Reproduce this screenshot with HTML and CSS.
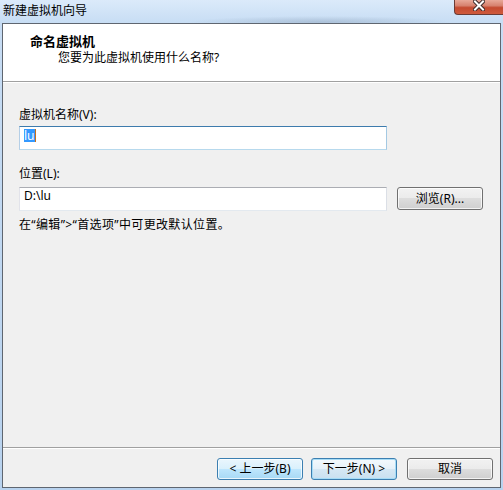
FILE: index.html
```html
<!DOCTYPE html>
<html lang="zh-CN">
<head>
<meta charset="utf-8">
<title>新建虚拟机向导</title>
<link rel="stylesheet" href="styles.css">
</head>
<body>
<div class="window">
  <div class="titlebar">
    <span class="title">新建虚拟机向导</span>
    <div class="close">
      <svg width="12" height="11" viewBox="0 0 12 11">
        <path d="M2 1.5 L10 9.5 M10 1.5 L2 9.5" stroke="#3c2a2a" stroke-width="4" stroke-linecap="square" fill="none"/>
        <path d="M2 1.5 L10 9.5 M10 1.5 L2 9.5" stroke="#ffffff" stroke-width="2" stroke-linecap="square" fill="none"/>
      </svg>
    </div>
  </div>
  <div class="client">
    <div class="header">
      <div class="h-title">命名虚拟机</div>
      <div class="h-sub">您要为此虚拟机使用什么名称?</div>
    </div>
    <div class="body">
      <div class="label first">虚拟机名称(V):</div>
      <div class="field focus"><span class="sel">lu</span></div>
      <div class="label second">位置(L):</div>
      <div class="row">
        <div class="field wide">D:\lu</div>
        <div class="btn browse">浏览(R)...</div>
      </div>
      <div class="hint">在“编辑”&gt;“首选项”中可更改默认位置。</div>
    </div>
    <div class="footer">
      <div class="btn hover">&lt; 上一步(B)</div>
      <div class="btn default">下一步(N) &gt;</div>
      <div class="btn cancel">取消</div>
    </div>
  </div>
</div>
</body>
</html>
```

FILE: styles.css
```css
html, body {
  margin: 0;
  padding: 0;
}

body {
  font-family: "Noto Sans", "Noto Sans CJK SC", sans-serif;
  font-size: 12px;
  line-height: 16px;
  color: #000;
}

.window {
  width: 503px;
  height: 490px;
  display: flex;
  flex-direction: column;
  overflow: hidden;
  background: linear-gradient(#c8ddf4, #b8d2ee);
}

.titlebar {
  height: 23px;
  flex: none;
  display: flex;
  align-items: flex-start;
  background:
    radial-gradient(ellipse 130px 6px at 320px 22px, rgba(120, 140, 165, 0.35), rgba(120, 140, 165, 0)),
    linear-gradient(#dbeafa, #c7ddf4);
}

.title {
  padding: 3px 0 0 3px;
}

.close {
  margin-left: auto;
  width: 49px;
  height: 15px;
  box-sizing: border-box;
  border: 1px solid #6b3b35;
  border-top: none;
  border-right: none;
  border-radius: 0 0 0 4px;
  background: linear-gradient(#e8a898 0%, #d7826f 40%, #c44a30 55%, #cf5a3c 100%);
  display: flex;
  justify-content: center;
  align-items: flex-start;
}

.client {
  flex: none;
  height: 465px;
  margin: 0 2px;
  box-sizing: border-box;
  border: 1px solid #5f6670;
  display: flex;
  flex-direction: column;
  background: #f0f0f0;
}

.header {
  flex: none;
  height: 57px;
  box-sizing: content-box;
  background: #fff;
  border-bottom: 1px solid #a0a0a0;
}

.h-title {
  font-size: 13px;
  font-weight: bold;
  padding: 9px 0 0 27px;
  line-height: 16px;
}

.h-sub {
  padding-left: 55px;
  line-height: 16px;
  margin-top: 1px;
}

.body {
  flex: 1;
  border-top: 1px solid #ffffff;
  padding: 24px 16px 0 16px;
  display: flex;
  flex-direction: column;
  align-items: flex-start;
}

.label.first {
  margin-bottom: 3px;
}

.label.second {
  margin-top: 16px;
  margin-bottom: 5px;
}

.field {
  width: 368px;
  height: 24px;
  box-sizing: border-box;
  border: 1px solid;
  border-color: #abadb3 #dbdfe6 #e3e9ef #e2e3ea;
  background: #fff;
  padding-left: 4px;
  line-height: 16px;
}

.field.focus {
  border-color: #3d7bad #a4c9e3 #b7d9ed #b5cfe7;
}

.sel {
  display: inline-block;
  vertical-align: top;
  margin-top: 2px;
  height: 13px;
  line-height: 13px;
  background: #3399ff;
  color: #fff;
  border-right: 1px solid #c8701c;
}

.row {
  display: flex;
  align-items: flex-start;
  gap: 10px;
}

.hint {
  margin-top: 6px;
  letter-spacing: 0.35px;
}

.btn {
  width: 86px;
  height: 22px;
  box-sizing: border-box;
  border: 1px solid #707070;
  border-radius: 3px;
  background: linear-gradient(#f2f2f2 0%, #ebebeb 50%, #dddddd 50%, #cfcfcf 100%);
  box-shadow: inset 0 0 0 1px rgba(255, 255, 255, 0.75);
  display: flex;
  align-items: center;
  justify-content: center;
  line-height: 16px;
}

.btn.browse {
  height: 23px;
}

.btn.hover {
  border-color: #3c7fb1;
  background: linear-gradient(#eaf6fd 0%, #d9f0fc 50%, #bee6fd 50%, #a7d9f5 100%);
  margin-right: 8px;
}

.btn.default {
  border-color: #3c7fb1;
  background: linear-gradient(#f3f9fd 0%, #e6f1f9 50%, #d6e8f4 50%, #c9e0f0 100%);
  box-shadow: inset 0 0 0 1px #a6dcf6;
  margin-right: 10px;
}

.footer {
  flex: none;
  height: 40px;
  box-sizing: border-box;
  border-top: 1px solid #a0a0a0;
  box-shadow: inset 0 1px 0 #ffffff;
  padding: 10px 7px 0 0;
  display: flex;
  justify-content: flex-end;
  align-items: flex-start;
}
```
